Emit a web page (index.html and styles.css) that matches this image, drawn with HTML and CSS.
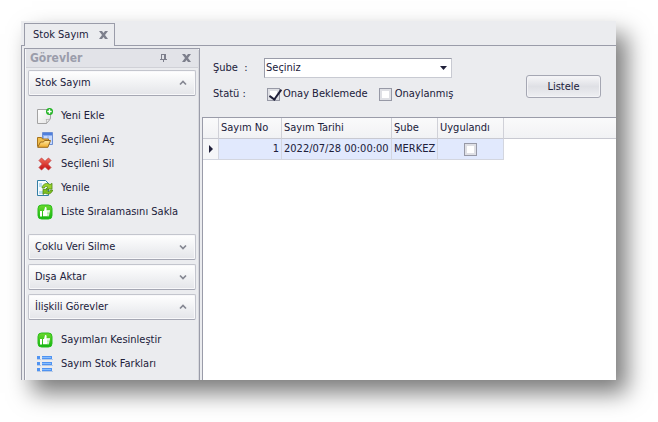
FILE: index.html
```html
<!DOCTYPE html>
<html lang="tr">
<head>
<meta charset="utf-8">
<title>Stok Sayım</title>
<link rel="stylesheet" href="styles.css">
</head>
<body>
<svg class="defs" aria-hidden="true">
  <defs>
    <linearGradient id="green" x1="0" y1="0" x2="0" y2="1"><stop offset="0" stop-color="#6cd82c"/><stop offset="1" stop-color="#12b512"/></linearGradient>
    <linearGradient id="paper" x1="0" y1="0" x2="1" y2="1"><stop offset="0" stop-color="#fff"/><stop offset="1" stop-color="#e4e4e4"/></linearGradient>
    <linearGradient id="folder" x1="0" y1="0" x2="0" y2="1"><stop offset="0" stop-color="#ffe9a0"/><stop offset="1" stop-color="#f0ab28"/></linearGradient>
    <linearGradient id="red" x1="0" y1="0" x2="0" y2="1"><stop offset="0" stop-color="#f2705c"/><stop offset="1" stop-color="#c40c10"/></linearGradient>
  </defs>
  <symbol id="close" viewBox="0 0 9 8"><path d="M0 0h3l1.500 2L6 0h3L6 4l3 4H6L4.500 6 3 8H0l3-4z" fill="#7d7f8c"/></symbol>
  <symbol id="up" viewBox="0 0 8 6"><path d="M1 4.500l3-3 3 3" fill="none" stroke="#858792" stroke-width="1.700"/></symbol>
  <symbol id="down" viewBox="0 0 8 6"><path d="M1 1.500l3 3 3-3" fill="none" stroke="#858792" stroke-width="1.700"/></symbol>
  <symbol id="thumb" viewBox="0 0 16 16">
    <rect x="1" y="1" width="14" height="14" rx="3.500" fill="url(#green)" stroke="#28bd1c"/>
    <path d="M3 7h2v5.500H3zM6 7h1l1-3.800c1.500-.4 1.900.8 1.500 3H13v1.300h-.3v1.500h-.3v1.500H12v1.700H6z" fill="#fff"/>
    <path d="M10 8.200h3M10 9.700h3M10 11.200h2.500" stroke="#5fcf4b" stroke-width=".5"/>
  </symbol>
</svg>
<div class="window">
  <nav class="tabs">
    <div class="tab"><span>Stok Sayım</span><button class="plain" aria-label="Sekmeyi kapat"><svg width="9" height="8"><use href="#close"/></svg></button></div>
  </nav>
  <div class="body">
    <aside class="panel">
      <header class="panel-head">
        <h2>Görevler</h2>
        <button class="plain" aria-label="Sabitle"><svg width="7" height="8" viewBox="0 0 7 8"><path d="M1.500 0v5M1 .5h4M0 5.500h7M3.500 5v3" fill="none" stroke="#7d7f8c"/><path d="M4 0h2v5H4z" fill="#7d7f8c"/></svg></button>
        <button class="plain" aria-label="Kapat"><svg width="9" height="8"><use href="#close"/></svg></button>
      </header>
      <button class="group">Stok Sayım<svg width="8" height="6"><use href="#up"/></svg></button>
      <ul class="tasks">
        <li><a href="#"><svg width="16" height="16" viewBox="0 0 16 16"><path d="M.5 1.500h13v9l-4 5h-9z" fill="url(#paper)" stroke="#a3a3a3"/><path d="M13.500 10.500l-4 5c.5-2 .3-3-.3-4 1.500.3 3 0 4.300-1z" fill="#fff" stroke="#a3a3a3" stroke-width=".8"/><circle cx="12.500" cy="3.500" r="3.500" fill="#1fb321"/><path d="M10.300 3.500h4.400M12.500 1.300v4.400" stroke="#fff" stroke-width="1.400"/></svg>Yeni Ekle</a></li>
        <li><a href="#"><svg width="16" height="16" viewBox="0 0 16 16"><path d="M5.500.5h10v12h-10z" fill="#8dafee" stroke="#6c8fd4"/><path d="M6 1h9v2H6z" fill="#4f7fdc"/><path d="M7 4h3.500v4H7zM11.500 4H15v8h-3.500z" fill="#c4d8ff"/><path d="M.5 14.500v-9h4l1 1.500h6v3" fill="#f0bd4a" stroke="#a7741e"/><path d="M.7 15.300L3.500 10h3l1-1.500h6l-2.600 6.800z" fill="url(#folder)" stroke="#9b6a1c"/></svg>Seçileni Aç</a></li>
        <li><a href="#"><svg width="16" height="16" viewBox="0 0 16 16"><path d="M2 4.500L4.500 2 8 5.300 11.500 2 14 4.500 10.700 8 14 11.500 11.500 14 8 10.700 4.500 14 2 11.500 5.300 8z" fill="url(#red)" stroke="#c0393a" stroke-width=".8"/></svg>Seçileni Sil</a></li>
        <li><a href="#"><svg width="16" height="16" viewBox="0 0 16 16"><path d="M.5.5h8l3 3v12H.5z" fill="#f5fbff" stroke="#337fa5"/><path d="M2 3h3v4H2zM2 11h4v3H2z" fill="#b9dcf0"/><path d="M5 8C5.500 3.500 10.500 2.300 13 4.700L15 3.300V9H9l1.800-1.800C9.300 6 7.800 6.500 7.200 8z" fill="#9ad22c" stroke="#4d8a14" stroke-width=".8"/><path d="M15.700 10c-1 4-5 5-7.700 3l-2 1.500V9.300h5.500L9.800 11c1.500 1 3 .6 3.700-1z" fill="#7fc01f" stroke="#4d8a14" stroke-width=".8"/></svg>Yenile</a></li>
        <li><a href="#"><svg width="16" height="16"><use href="#thumb"/></svg>Liste Sıralamasını Sakla</a></li>
      </ul>
      <button class="group">Çoklu Veri Silme<svg width="8" height="6"><use href="#down"/></svg></button>
      <button class="group">Dışa Aktar<svg width="8" height="6"><use href="#down"/></svg></button>
      <button class="group">İlişkili Görevler<svg width="8" height="6"><use href="#up"/></svg></button>
      <ul class="tasks">
        <li><a href="#"><svg width="16" height="16"><use href="#thumb"/></svg>Sayımları Kesinleştir</a></li>
        <li><a href="#"><svg width="16" height="16" viewBox="0 0 16 16"><g fill="#b9cbe5"><path d="M0 3h4v1H0zM5 3h11v1H5zM0 9h4v1H0zM5 9h11v1H5zM0 15h4v1H0zM5 15h11v1H5z"/></g><g fill="#4f93f2"><path d="M0 0h3v3H0zM0 6h3v3H0zM0 12h3v3H0zM5 0h10v3H5zM5 6h10v3H5zM5 12h10v3H5z"/></g><path d="M5 1h9v1H5zM5 7h9v1H5zM5 13h9v1H5z" fill="#86bdfd"/></svg>Sayım Stok Farkları</a></li>
      </ul>
    </aside>
    <main class="content">
      <form class="filters">
        <div class="fields">
          <label for="sube">Şube&nbsp; :</label>
          <div class="select"><select id="sube"><option>Seçiniz</option></select><svg width="7" height="4" viewBox="0 0 7 4"><path d="M0 0h7L3.500 4z" fill="#20203a"/></svg></div>
          <span>Statü :</span>
          <div class="checks">
            <label><input type="checkbox" class="check" checked>Onay Beklemede</label>
            <label><input type="checkbox" class="check">Onaylanmış</label>
          </div>
        </div>
        <button type="button" class="list-button">Listele</button>
      </form>
      <table>
        <thead><tr><th></th><th>Sayım No</th><th>Sayım Tarihi</th><th>Şube</th><th>Uygulandı</th><th></th></tr></thead>
        <tbody><tr><td class="mark"><svg width="4" height="8" viewBox="0 0 4 8"><path d="M0 0l4 4-4 4z" fill="#20203a"/></svg></td><td class="num">1</td><td>2022/07/28 00:00:00</td><td>MERKEZ</td><td class="mid"><input type="checkbox" class="check" aria-label="Uygulandı"></td><td class="rest"></td></tr></tbody>
      </table>
    </main>
  </div>
</div>
</body>
</html>
```
FILE: styles.css
```css
* { box-sizing: border-box; }
html, body { height: 100%; }
body {
  margin: 0;
  padding: 21px 42px 42px 21px;
  background: #fff;
  color: #20203a;
  font: 11px/14px Tahoma, "DejaVu Sans Condensed", sans-serif;
}
button, select, input { font: inherit; color: inherit; margin: 0; }
svg { display: block; flex: none; }
.defs { position: absolute; width: 0; height: 0; }
.window {
  height: 100%;
  display: flex;
  flex-direction: column;
  background: #ebecef;
  box-shadow: 11px 13px 22px rgba(0, 0, 0, .52);
}
.tabs { height: 25px; padding: 2px 3px 0; border-bottom: 1px solid #9a9ca9; }
.tab {
  width: 91px;
  height: 23px;
  display: flex;
  align-items: center;
  justify-content: space-between;
  padding: 0 6px 0 8px;
  background: #ebecef;
  border: 1px solid #9a9ca9;
  border-bottom: 0;
}
.plain { display: block; padding: 0; border: 0; background: none; }
.body { flex: 1; min-height: 0; display: flex; border-left: 1px solid #9a9ca9; }
.panel {
  width: 176px;
  flex: none;
  margin: 2px 2px 0;
  padding: 0 3px;
  overflow: hidden;
  border: 1px solid #9a9ca9;
  border-bottom: 0;
  background: #ebecef;
  box-shadow: inset 1px 1px #f8f8fa, inset -1px 0 #d8d9de;
}
.panel-head {
  height: 19px;
  display: flex;
  align-items: center;
  gap: 15px;
  margin: 0 -2px 2px;
  padding: 0 7px 0 4px;
  background: #e2e3e8;
  border-bottom: 1px solid #d0d1d7;
}
.panel-head h2 { margin: 0 auto 0 0; font-size: 12px; color: #9b9dab; }
.group {
  width: 100%;
  height: 26px;
  display: flex;
  align-items: center;
  justify-content: space-between;
  margin-bottom: 4px;
  padding: 0 8px 0 6px;
  border: 1px solid #c3c5cd;
  border-bottom-color: #a5a7b3;
  border-radius: 2px;
  background: linear-gradient(#fff, #f1f2f4 50%, #e4e5e9);
  box-shadow: inset 0 0 0 1px #f8f8fa;
}
.tasks { list-style: none; margin: 0; padding: 4px 0 10px 9px; }
.tasks li { height: 24px; display: flex; align-items: center; }
.tasks a { display: flex; align-items: center; gap: 8px; color: inherit; text-decoration: none; white-space: nowrap; }
.content { flex: 1; min-width: 0; display: flex; flex-direction: column; }
.filters { height: 71px; display: flex; justify-content: space-between; padding: 12px 15px 0 11px; }
.fields { display: grid; grid-template-columns: 51px 188px; grid-template-rows: 20px 20px; row-gap: 6px; align-items: center; }
.select { position: relative; height: 20px; }
.select select {
  appearance: none;
  width: 100%;
  height: 100%;
  padding: 0 1px;
  border: 1px solid #9a9ca9;
  border-color: #9a9ca9 #c8cad2 #c8cad2 #9a9ca9;
  border-radius: 0;
  background: #fff;
}
.select svg { position: absolute; right: 5px; top: 8px; }
.checks { display: flex; gap: 11px; padding-left: 3px; white-space: nowrap; }
.checks label { display: flex; align-items: center; gap: 3px; }
.check {
  appearance: none;
  flex: none;
  width: 13px;
  height: 13px;
  border: 1px solid #9799a6;
  background: #fff;
  box-shadow: inset 0 0 0 2px #dfe0e5;
}
.check:checked { position: relative; }
.check:checked::after {
  content: "";
  position: absolute;
  left: 4px;
  top: -2px;
  width: 5px;
  height: 11px;
  border: solid #20203a;
  border-width: 0 2px 2px 0;
  transform: rotate(36deg);
}
.list-button {
  width: 75px;
  height: 23px;
  margin-top: 17px;
  padding: 0;
  border: 1px solid #a5a7b3;
  border-radius: 3px;
  background: linear-gradient(#f6f6f8, #dfe0e5 50%, #eeeff2);
  box-shadow: inset 0 0 0 1px #f3f3f6;
}
table {
  flex: 1;
  width: 100%;
  display: block;
  background: #fff;
  border: 1px solid #9a9ca9;
  border-width: 1px 0 0 1px;
}
thead, tbody { display: block; }
tr { display: grid; grid-template-columns: 16px 63px 110px 46px 66px 1fr; }
th, td { height: 21px; padding: 3px 2px; border-right: 1px solid #d0d1d8; border-bottom: 1px solid #c8c9d1; font-weight: normal; text-align: left; white-space: nowrap; }
th { background: linear-gradient(#fafafb, #f1f2f4); }
th:last-child { border-right: 0; }
td { background: #e1e9fd; border-color: #d3d6df; }
td.mark { display: flex; align-items: center; padding-left: 6px; background: #f5f6f8; }
td.num { text-align: right; }
td.mid { display: flex; align-items: center; justify-content: center; }
td.rest { border: 0; background: #fff; }
```
